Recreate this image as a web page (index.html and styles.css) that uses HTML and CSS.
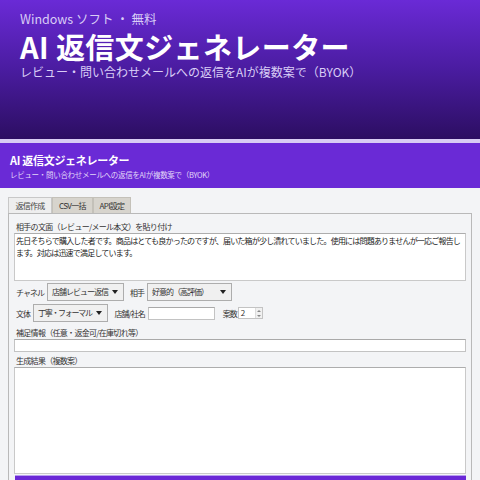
FILE: index.html
```html
<!DOCTYPE html>
<html lang="ja">

<head>
  <meta charset="UTF-8">
  <meta name="viewport" content="width=device-width, initial-scale=1.0">
  <title>AI 返信文ジェネレーター</title>
  <link rel="stylesheet" href="styles.css">
</head>

<body>

  <!-- Hero -->
  <header class="hero">
    <p class="hero-kicker">Windows ソフト ・ 無料</p>
    <h1 class="hero-title">AI 返信文ジェネレーター</h1>
    <p class="hero-sub">レビュー・問い合わせメールへの返信をAIが複数案で（BYOK）</p>
  </header>
  <div class="hero-line"></div>

  <!-- App window -->
  <div class="app">
    <div class="app-bar">
      <div class="app-title">AI 返信文ジェネレーター</div>
      <div class="app-sub">レビュー・問い合わせメールへの返信をAIが複数案で（BYOK）</div>
    </div>

    <div class="app-body">
      <div class="tabs">
        <span class="tab tab-1 active">返信作成</span>
        <span class="tab tab-2">CSV一括</span>
        <span class="tab tab-3">API設定</span>
      </div>

      <div class="panel">
        <label class="field-label" for="src">相手の文面（レビュー/メール本文）を貼り付け</label>
        <div class="box src" id="src">先日そちらで購入した者です。商品はとても良かったのですが、届いた箱が少し潰れていました。使用には問題ありませんが一応ご報告し<br>ます。対応は迅速で満足しています。</div>

        <div class="row">
          <span class="lbl">チャネル</span>
          <span class="select">店舗レビュー返信</span>
          <span class="lbl">相手</span>
          <span class="select w-tone">好意的（高評価）</span>
        </div>

        <div class="row row-2">
          <span class="lbl">文体</span>
          <span class="select w-style">丁寧・フォーマル</span>
          <span class="lbl">店舗/社名</span>
          <input class="text w-shop" type="text">
          <span class="lbl">案数</span>
          <span class="spin">
            <span class="spin-val">2</span>
            <span class="spin-btns"><i class="up"></i><i class="down"></i></span>
          </span>
        </div>

        <label class="field-label" for="note">補足情報（任意・返金可/在庫切れ等）</label>
        <input class="text wide" id="note" type="text">

        <label class="field-label" for="out">生成結果（複数案）</label>
        <div class="box out" id="out"></div>

        <div class="go"></div>
      </div>
    </div>
  </div>

</body>

</html>
```

FILE: styles.css
```css
* {
  box-sizing: border-box;
}

body {
  margin: 0;
  font-family: "Noto Sans CJK JP", "Noto Sans", sans-serif;
  background: #f3f4f6;
  overflow: hidden;
}

/* top banner */
.hero {
  height: 139px;
  padding: 10px 20px 0;
  background: linear-gradient(180deg, #6a2ad6 0%, #4a1ca0 50%, #2c0e62 100%);
  color: #fff;
}

.hero-kicker {
  margin: 0;
  font-size: 12.5px;
  line-height: 18px;
  color: #d9cdf6;
}

.hero-title {
  margin: 0;
  font-size: 29px;
  line-height: 36px;
  font-weight: 700;
  letter-spacing: 0.4px;
}

.hero-sub {
  margin: 0;
  font-size: 12px;
  line-height: 16px;
  color: #d9cdf6;
}

.hero-line {
  height: 4px;
  background: #d8ccf4;
}

/* app window */
.app-bar {
  height: 45px;
  padding: 8px 10px 0;
  background: #6a2ad6;
}

.app-title {
  font-size: 11px;
  line-height: 18px;
  font-weight: 700;
  letter-spacing: -0.3px;
  color: #fff;
}

.app-sub {
  font-size: 7.5px;
  line-height: 12px;
  letter-spacing: -0.3px;
  color: #e2d8f8;
}

.app-body {
  padding: 9px 8px 0;
  font-size: 8px;
  letter-spacing: -0.7px;
  color: #333;
}

.tabs {
  display: flex;
  height: 16px;
}

.tab {
  text-align: center;
  line-height: 15px;
  background: #d7d4cd;
  color: #333;
  border: 1px solid #c4c1b9;
  border-bottom: none;
  white-space: nowrap;
}

.tab-1 {
  width: 44px;
}

.tab-2 {
  width: 41px;
}

.tab-3 {
  width: 38px;
}

.tab.active {
  background: #eeeeee;
  border-color: #c8c8c8;
  color: #444;
}

.panel {
  height: 280px;
  padding: 6px 5px 0 5px;
  border: 1px solid #b9b9b9;
  background: #f3f4f6;
}

.field-label {
  display: block;
  line-height: 13px;
  padding-left: 2px;
  white-space: nowrap;
}

.box {
  background: #fff;
  border: 1px solid #c9c9c9;
  border-top-color: #adadad;
}

.src {
  height: 48px;
  padding: 1px 1px;
  line-height: 12px;
  letter-spacing: -0.8px;
  color: #222;
  white-space: nowrap;
  overflow: hidden;
}

/* option rows */
.row {
  display: flex;
  align-items: center;
  height: 20px;
  margin-top: 1px;
  padding-left: 2px;
  letter-spacing: -1px;
  white-space: nowrap;
}

.row-2 {
  margin-bottom: 3px;
}

.lbl {
  margin-right: 3px;
}

.select {
  position: relative;
  height: 18px;
  padding: 0 15px 0 4px;
  line-height: 16px;
  background: #f0f0f0;
  border: 1px solid #adadad;
  margin-right: 6px;
}

.select::after {
  content: "";
  position: absolute;
  right: 5px;
  top: 6px;
  border-left: 3px solid transparent;
  border-right: 3px solid transparent;
  border-top: 4px solid #222;
}

.w-tone {
  min-width: 85px;
}

.w-style {
  letter-spacing: -1.3px;
  margin-right: 7px;
}

.text {
  display: block;
  height: 13px;
  padding: 0 2px;
  border: 1px solid #c3c3c3;
  border-top-color: #a9a9a9;
  background: #fff;
  outline: 0;
  font: inherit;
}

.w-shop {
  width: 67px;
  margin: 0 8px 0 0;
}

.wide {
  width: 100%;
  margin-bottom: 2px;
}

.spin {
  display: flex;
  width: 25px;
  height: 12px;
  margin-left: -2px;
  border: 1px solid #c3c3c3;
  background: #fff;
}

.spin-val {
  flex: 1;
  padding-left: 2px;
  line-height: 10px;
}

.spin-btns {
  display: flex;
  flex-direction: column;
  justify-content: space-around;
  align-items: center;
  width: 7px;
  background: #f0f0f0;
  border-left: 1px solid #ddd;
}

.spin-btns i {
  border-left: 2px solid transparent;
  border-right: 2px solid transparent;
}

.spin-btns .up {
  border-bottom: 2px solid #888;
}

.spin-btns .down {
  border-top: 2px solid #888;
}

.out {
  height: 107px;
}

.go {
  height: 12px;
  margin-top: 1px;
  margin-left: 1px;
  background: #6a28d6;
  border-top: 1px solid #b89ef0;
}
```
